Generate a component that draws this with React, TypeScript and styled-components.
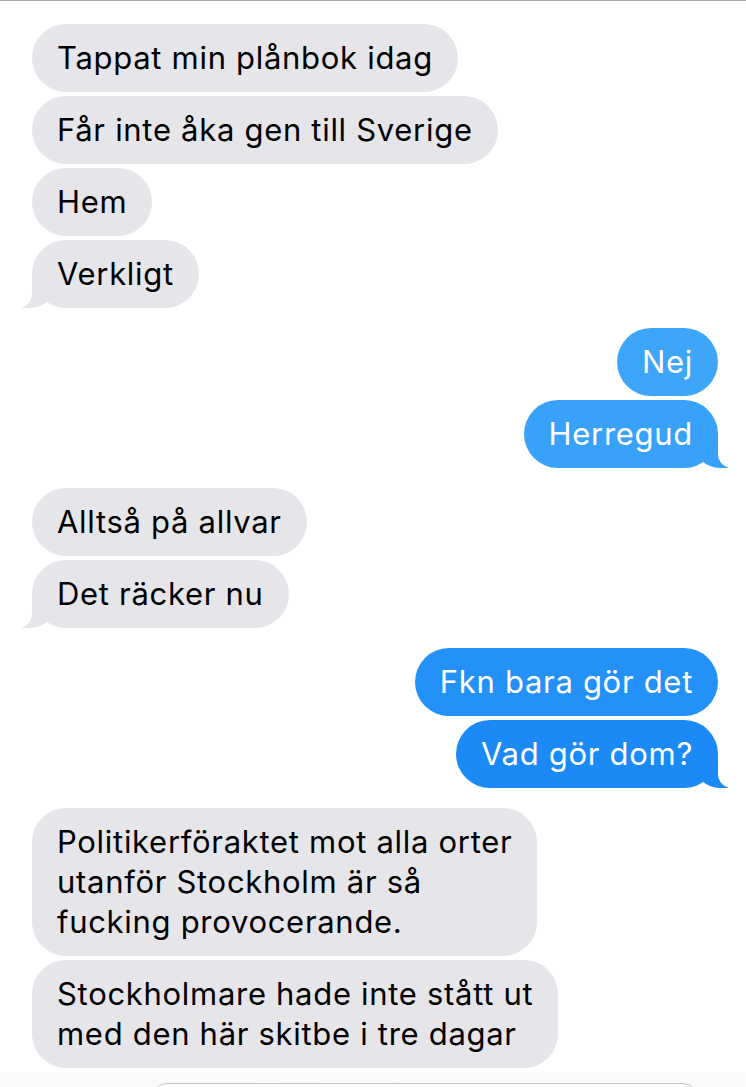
import React from "react";
import styled, { createGlobalStyle, css } from "styled-components";

type Message = {
  id: number;
  lines: string[];
  color?: string;
};

type Group = {
  id: number;
  sent: boolean;
  messages: Message[];
  tail: boolean;
};

const thread: Group[] = [
  {
    id: 1,
    sent: false,
    tail: true,
    messages: [
      { id: 1, lines: ["Tappat min plånbok idag"] },
      { id: 2, lines: ["Får inte åka gen till Sverige"] },
      { id: 3, lines: ["Hem"] },
      { id: 4, lines: ["Verkligt"] },
    ],
  },
  {
    id: 2,
    sent: true,
    tail: true,
    messages: [
      { id: 5, lines: ["Nej"], color: "#3ea6f9" },
      { id: 6, lines: ["Herregud"], color: "#38a1f9" },
    ],
  },
  {
    id: 3,
    sent: false,
    tail: true,
    messages: [
      { id: 7, lines: ["Alltså på allvar"] },
      { id: 8, lines: ["Det räcker nu"] },
    ],
  },
  {
    id: 4,
    sent: true,
    tail: true,
    messages: [
      { id: 9, lines: ["Fkn bara gör det"], color: "#2391f8" },
      { id: 10, lines: ["Vad gör dom?"], color: "#1b8af7" },
    ],
  },
  {
    id: 5,
    sent: false,
    tail: false,
    messages: [
      {
        id: 11,
        lines: [
          "Politikerföraktet mot alla orter",
          "utanför Stockholm är så",
          "fucking provocerande.",
        ],
      },
      {
        id: 12,
        lines: ["Stockholmare hade inte stått ut", "med den här skitbe i tre dagar"],
      },
    ],
  },
];

const App: React.FC = () => {
  return (
    <Page>
      <GlobalStyle />
      <TopEdge />
      <Thread>
        {thread.map((g) => (
          <MessageGroup key={g.id} $sent={g.sent}>
            {g.messages.map((m, i) => (
              <Bubble
                key={m.id}
                $sent={g.sent}
                $color={m.color || "#e5e5ea"}
                $tail={g.tail && i === g.messages.length - 1}
              >
                {m.lines.map((line, j) => (
                  <React.Fragment key={j}>
                    {j > 0 && <br />}
                    {line}
                  </React.Fragment>
                ))}
              </Bubble>
            ))}
          </MessageGroup>
        ))}
      </Thread>
      <Composer>
        <InputField />
      </Composer>
    </Page>
  );
};

const GlobalStyle = createGlobalStyle`
  body {
    margin: 0;
    background: #ffffff;
    font-family: Inter, "Liberation Sans", sans-serif;
  }
`;

const Page = styled.div`
  width: 746px;
  height: 1087px;
  display: flex;
  flex-direction: column;
  overflow: hidden;
  background: #ffffff;
`;

const TopEdge = styled.div`
  height: 1px;
  background: #acacac;
  flex-shrink: 0;
`;

const Thread = styled.div`
  flex: 1;
  display: flex;
  flex-direction: column;
  gap: 20px;
  padding: 23px 28px 0 32px;
  overflow: hidden;
`;

const MessageGroup = styled.div<{ $sent: boolean }>`
  display: flex;
  flex-direction: column;
  gap: 4px;
  align-items: ${(p) => (p.$sent ? "flex-end" : "flex-start")};
`;

const receivedTail = css`
  &::before {
    content: "";
    position: absolute;
    bottom: 0;
    left: -10px;
    width: 34px;
    height: 34px;
    background: inherit;
    border-bottom-right-radius: 26px;
  }
  &::after {
    content: "";
    position: absolute;
    bottom: 0;
    left: -15px;
    width: 15px;
    height: 36px;
    background: #ffffff;
    border-bottom-right-radius: 14px;
  }
`;

const sentTail = css`
  &::before {
    content: "";
    position: absolute;
    bottom: 0;
    right: -10px;
    width: 34px;
    height: 34px;
    background: inherit;
    border-bottom-left-radius: 26px;
  }
  &::after {
    content: "";
    position: absolute;
    bottom: 0;
    right: -15px;
    width: 15px;
    height: 36px;
    background: #ffffff;
    border-bottom-left-radius: 14px;
  }
`;

const Bubble = styled.div<{ $sent: boolean; $color: string; $tail: boolean }>`
  position: relative;
  background: ${(p) => p.$color};
  color: ${(p) => (p.$sent ? "#ffffff" : "#000000")};
  font-size: 31px;
  letter-spacing: 0.7px;
  line-height: 40px;
  padding: 14px 25px;
  border-radius: 34px;
  white-space: nowrap;
  ${(p) => p.$tail && (p.$sent ? sentTail : receivedTail)}
`;

const Composer = styled.div`
  height: 15px;
  flex-shrink: 0;
  background: linear-gradient(90deg, #f9f9fb, #fbfbfc);
  padding: 11px 46px 0 150px;
  box-sizing: border-box;
  overflow: hidden;
`;

const InputField = styled.div`
  height: 36px;
  border: 1px solid #c4c4c7;
  border-radius: 18px;
  background: #ffffff;
`;

export default App;
